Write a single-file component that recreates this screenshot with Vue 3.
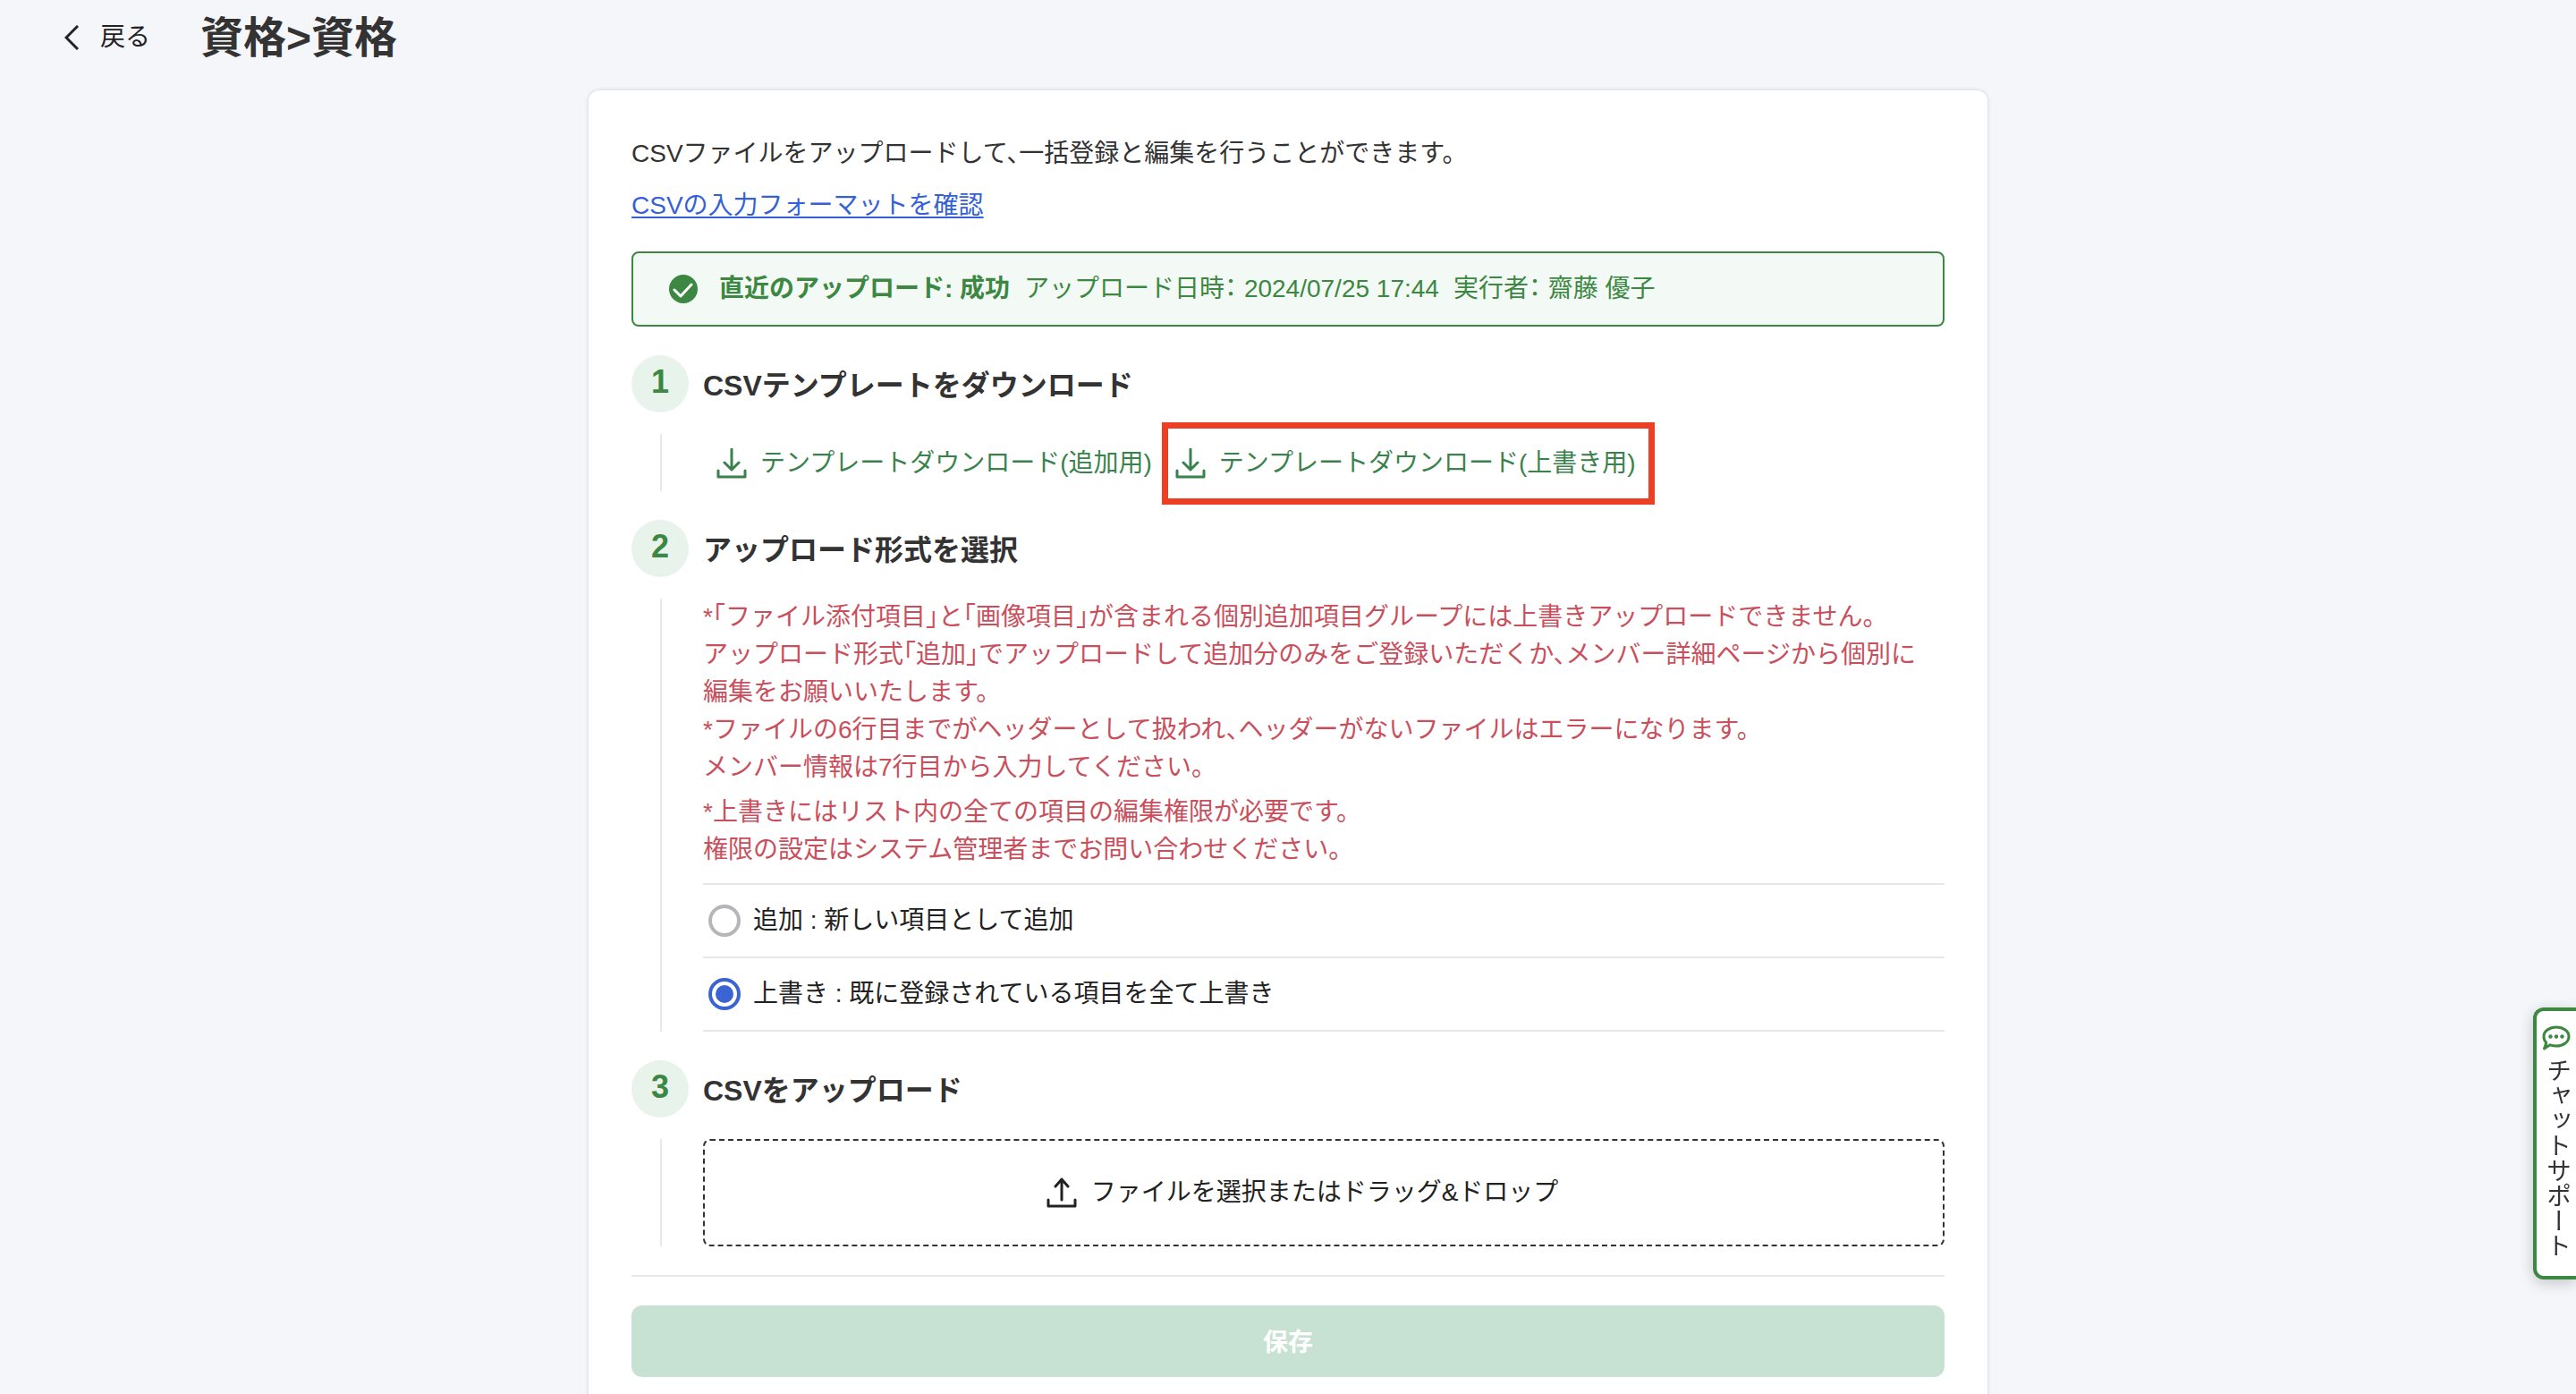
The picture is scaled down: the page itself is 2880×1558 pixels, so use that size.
<script setup>
import { ref } from 'vue'

const mode = ref('overwrite')

const modes = [
  { value: 'add', label: '追加 : 新しい項目として追加' },
  { value: 'overwrite', label: '上書き : 既に登録されている項目を全て上書き' },
]

const templates = [
  { id: 'add', label: 'テンプレートダウンロード(追加用)', marked: false },
  { id: 'overwrite', label: 'テンプレートダウンロード(上書き用)', marked: true },
]
</script>

<template>
  <div class="page">
    <header class="header">
      <a href="#" class="back">
        <svg class="back-icon" width="16" height="28" viewBox="0 0 16 28" fill="none" stroke="currentColor" stroke-width="3" aria-hidden="true">
          <path d="M15 1 2 14l13 13" />
        </svg>
        <span>戻る</span>
      </a>
      <h1 class="title">資格&gt;資格</h1>
    </header>

    <main class="card">
      <p class="lead">CSVファイルをアップロードして、一括登録と編集を行うことができます。</p>
      <p class="format"><a href="#">CSVの入力フォーマットを確認</a></p>

      <div class="status" role="status">
        <svg class="status-icon" width="32" height="32" viewBox="0 0 32 32" aria-hidden="true">
          <circle cx="16" cy="16" r="16" fill="#3c8741" />
          <path d="m6 17 7 7 12-13" fill="none" stroke="#fff" stroke-width="3" stroke-linecap="round" stroke-linejoin="round" />
        </svg>
        <div class="status-text">
          <strong>直近のアップロード: 成功</strong>
          <span>アップロード日時： 2024/07/25 17:44</span>
          <span>実行者： 齋藤 優子</span>
        </div>
      </div>

      <section class="step">
        <div class="step-head">
          <span class="step-number">1</span>
          <h2>CSVテンプレートをダウンロード</h2>
        </div>
        <div class="step-body downloads">
          <button v-for="t in templates" :key="t.id" type="button" class="download" :class="{ marked: t.marked }">
            <svg width="34" height="34" viewBox="0 0 34 34" fill="none" stroke="currentColor" stroke-width="3" stroke-linecap="round" stroke-linejoin="round" aria-hidden="true">
              <path d="M17 1v22M9 16l8 8 8-8M2 25v7h30v-7" />
            </svg>
            <span>{{ t.label }}</span>
          </button>
        </div>
      </section>

      <section class="step">
        <div class="step-head">
          <span class="step-number">2</span>
          <h2>アップロード形式を選択</h2>
        </div>
        <div class="step-body">
          <p class="note">
            *「ファイル添付項目」と「画像項目」が含まれる個別追加項目グループには上書きアップロードできません。<br />
            アップロード形式「追加」でアップロードして追加分のみをご登録いただくか、メンバー詳細ページから個別に<br />
            編集をお願いいたします。<br />
            *ファイルの6行目までがヘッダーとして扱われ、ヘッダーがないファイルはエラーになります。<br />
            メンバー情報は7行目から入力してください。
          </p>
          <p class="note">
            *上書きにはリスト内の全ての項目の編集権限が必要です。<br />
            権限の設定はシステム管理者までお問い合わせください。
          </p>
          <div class="modes" role="radiogroup" aria-label="アップロード形式">
            <label v-for="m in modes" :key="m.value" class="mode">
              <input v-model="mode" type="radio" name="mode" :value="m.value" />
              <span>{{ m.label }}</span>
            </label>
          </div>
        </div>
      </section>

      <section class="step">
        <div class="step-head">
          <span class="step-number">3</span>
          <h2>CSVをアップロード</h2>
        </div>
        <div class="step-body">
          <button type="button" class="dropzone">
            <svg width="34" height="34" viewBox="0 0 34 34" fill="none" stroke="currentColor" stroke-width="3" stroke-linejoin="round" stroke-linecap="round" aria-hidden="true">
              <path d="M17 25V2M10 10l7-8 7 8M2 25v7h30v-7" />
            </svg>
            <span>ファイルを選択またはドラッグ&amp;ドロップ</span>
          </button>
        </div>
      </section>

      <div class="footer">
        <button type="button" class="save" disabled>保存</button>
      </div>
    </main>

    <button type="button" class="chat">
      <svg width="32" height="28" viewBox="0 0 32 28" aria-hidden="true">
        <path d="M16 2c8 0 14 4.600 14 10.500S24 23 16 23c-2.600 0-5-.4-7-1.200L2.500 26l2.300-6.500C3 17.600 2 15.200 2 12.500 2 6.600 8 2 16 2Z" fill="none" stroke="#3c8741" stroke-width="3" stroke-linejoin="round" />
        <g fill="#3c8741">
          <circle cx="9.500" cy="12.500" r="2.200" />
          <circle cx="16" cy="12.500" r="2.200" />
          <circle cx="22.500" cy="12.500" r="2.200" />
        </g>
      </svg>
      <span class="chat-label">チャットサポート</span>
    </button>
  </div>
</template>

<style>
body {
  margin: 0;
  background: #f5f6fa;
}
</style>

<style scoped>
.page {
  box-sizing: border-box;
  height: 100vh;
  overflow: hidden;
  background: #f5f6fa;
  color: #333;
  font-family: "Liberation Sans", "Noto Sans CJK JP", sans-serif;
  font-size: 28px;
  line-height: 42px;
  font-feature-settings: "halt" 1;
}

.page *,
.page *::after {
  box-sizing: border-box;
}

h1,
h2,
p {
  margin: 0;
}

button {
  margin: 0;
  border: 0;
  background: none;
  font: inherit;
  font-feature-settings: inherit;
  color: inherit;
  cursor: pointer;
}

svg {
  flex: none;
}

.header {
  display: flex;
  align-items: center;
  gap: 56px;
  height: 84px;
  padding: 0 72px;
}

.back {
  display: flex;
  align-items: center;
  gap: 24px;
  color: #222;
  text-decoration: none;
}

.title {
  padding-top: 2px;
  font-size: 48px;
  line-height: 64px;
}

.card {
  width: calc(100% - 96px);
  max-width: 1564px;
  margin: 17px auto 0;
  padding: 50px 48px 48px;
  border-radius: 12px;
  background: #fff;
  box-shadow: 0 0 4px rgba(40, 50, 80, 0.2);
}

.format {
  margin-top: 16px;
}

.format a {
  color: #3461d9;
  text-underline-offset: 3px;
  text-decoration-thickness: 2px;
}

.status {
  display: flex;
  align-items: center;
  gap: 24px;
  margin: 30px 0 32px;
  padding: 19px 40px;
  border: 2px solid #3c8741;
  border-radius: 8px;
  background: #f3f9f5;
  color: #3c8741;
}

.status-text {
  display: flex;
  flex-wrap: wrap;
  gap: 0 16px;
}

.step {
  margin-bottom: 32px;
}

.step-head {
  display: flex;
  align-items: center;
  gap: 16px;
  margin-bottom: 24px;
}

.step-number {
  display: flex;
  align-items: center;
  justify-content: center;
  width: 64px;
  height: 64px;
  padding-bottom: 4px;
  border-radius: 50%;
  background: #e8f3ec;
  color: #3c8741;
  font-size: 36px;
  font-weight: 700;
}

h2 {
  padding-top: 4px;
  font-size: 32px;
  line-height: 48px;
}

.step-body {
  margin-left: 32px;
  padding-left: 46px;
  border-left: 2px solid #e8e8e8;
}

.downloads {
  display: flex;
}

.download {
  position: relative;
  display: flex;
  align-items: center;
  gap: 15px;
  height: 64px;
  padding: 2px 11px 0 15px;
  color: #3a824c;
}

.download.marked::after {
  content: "";
  position: absolute;
  inset: -13px -10px -15px 0;
  border: 7px solid #ec3f24;
}

.note {
  color: #c94f5d;
}

.note + .note {
  margin-top: 8px;
}

.modes {
  margin-top: 16px;
  border-top: 2px solid #e8e8e8;
  color: #222;
}

.mode {
  display: flex;
  align-items: center;
  gap: 14px;
  height: 82px;
  padding-left: 6px;
  border-bottom: 2px solid #e8e8e8;
}

.mode input {
  appearance: none;
  width: 36px;
  height: 36px;
  margin: 0;
  border: 4px solid #b5b5ba;
  border-radius: 50%;
  background: #fff;
}

.mode input:checked {
  border-color: #3a64d4;
  padding: 4px;
  background: #3a64d4 content-box;
}

.dropzone {
  display: flex;
  align-items: center;
  justify-content: center;
  gap: 16px;
  width: 100%;
  height: 120px;
  padding: 0 48px 0 0;
  border: 2px dashed #333;
  border-radius: 8px;
  color: #222;
}

.footer {
  padding-top: 32px;
  border-top: 2px solid #e8e8e8;
}

.save {
  width: 100%;
  height: 80px;
  padding: 4px 0 0;
  border-radius: 12px;
  background: #c7e2d2;
  color: #fff;
  font-weight: 700;
}

.chat {
  position: fixed;
  right: 0;
  top: 1126px;
  display: flex;
  flex-direction: column;
  align-items: center;
  gap: 8px;
  width: 48px;
  padding: 16px 0 20px;
  border: 4px solid #3c8741;
  border-right: 0;
  border-radius: 12px 0 0 12px;
  background: #fff;
  box-shadow: 0 4px 16px rgba(0, 0, 0, 0.2);
}

.chat-label {
  writing-mode: vertical-rl;
  line-height: 32px;
}
</style>
